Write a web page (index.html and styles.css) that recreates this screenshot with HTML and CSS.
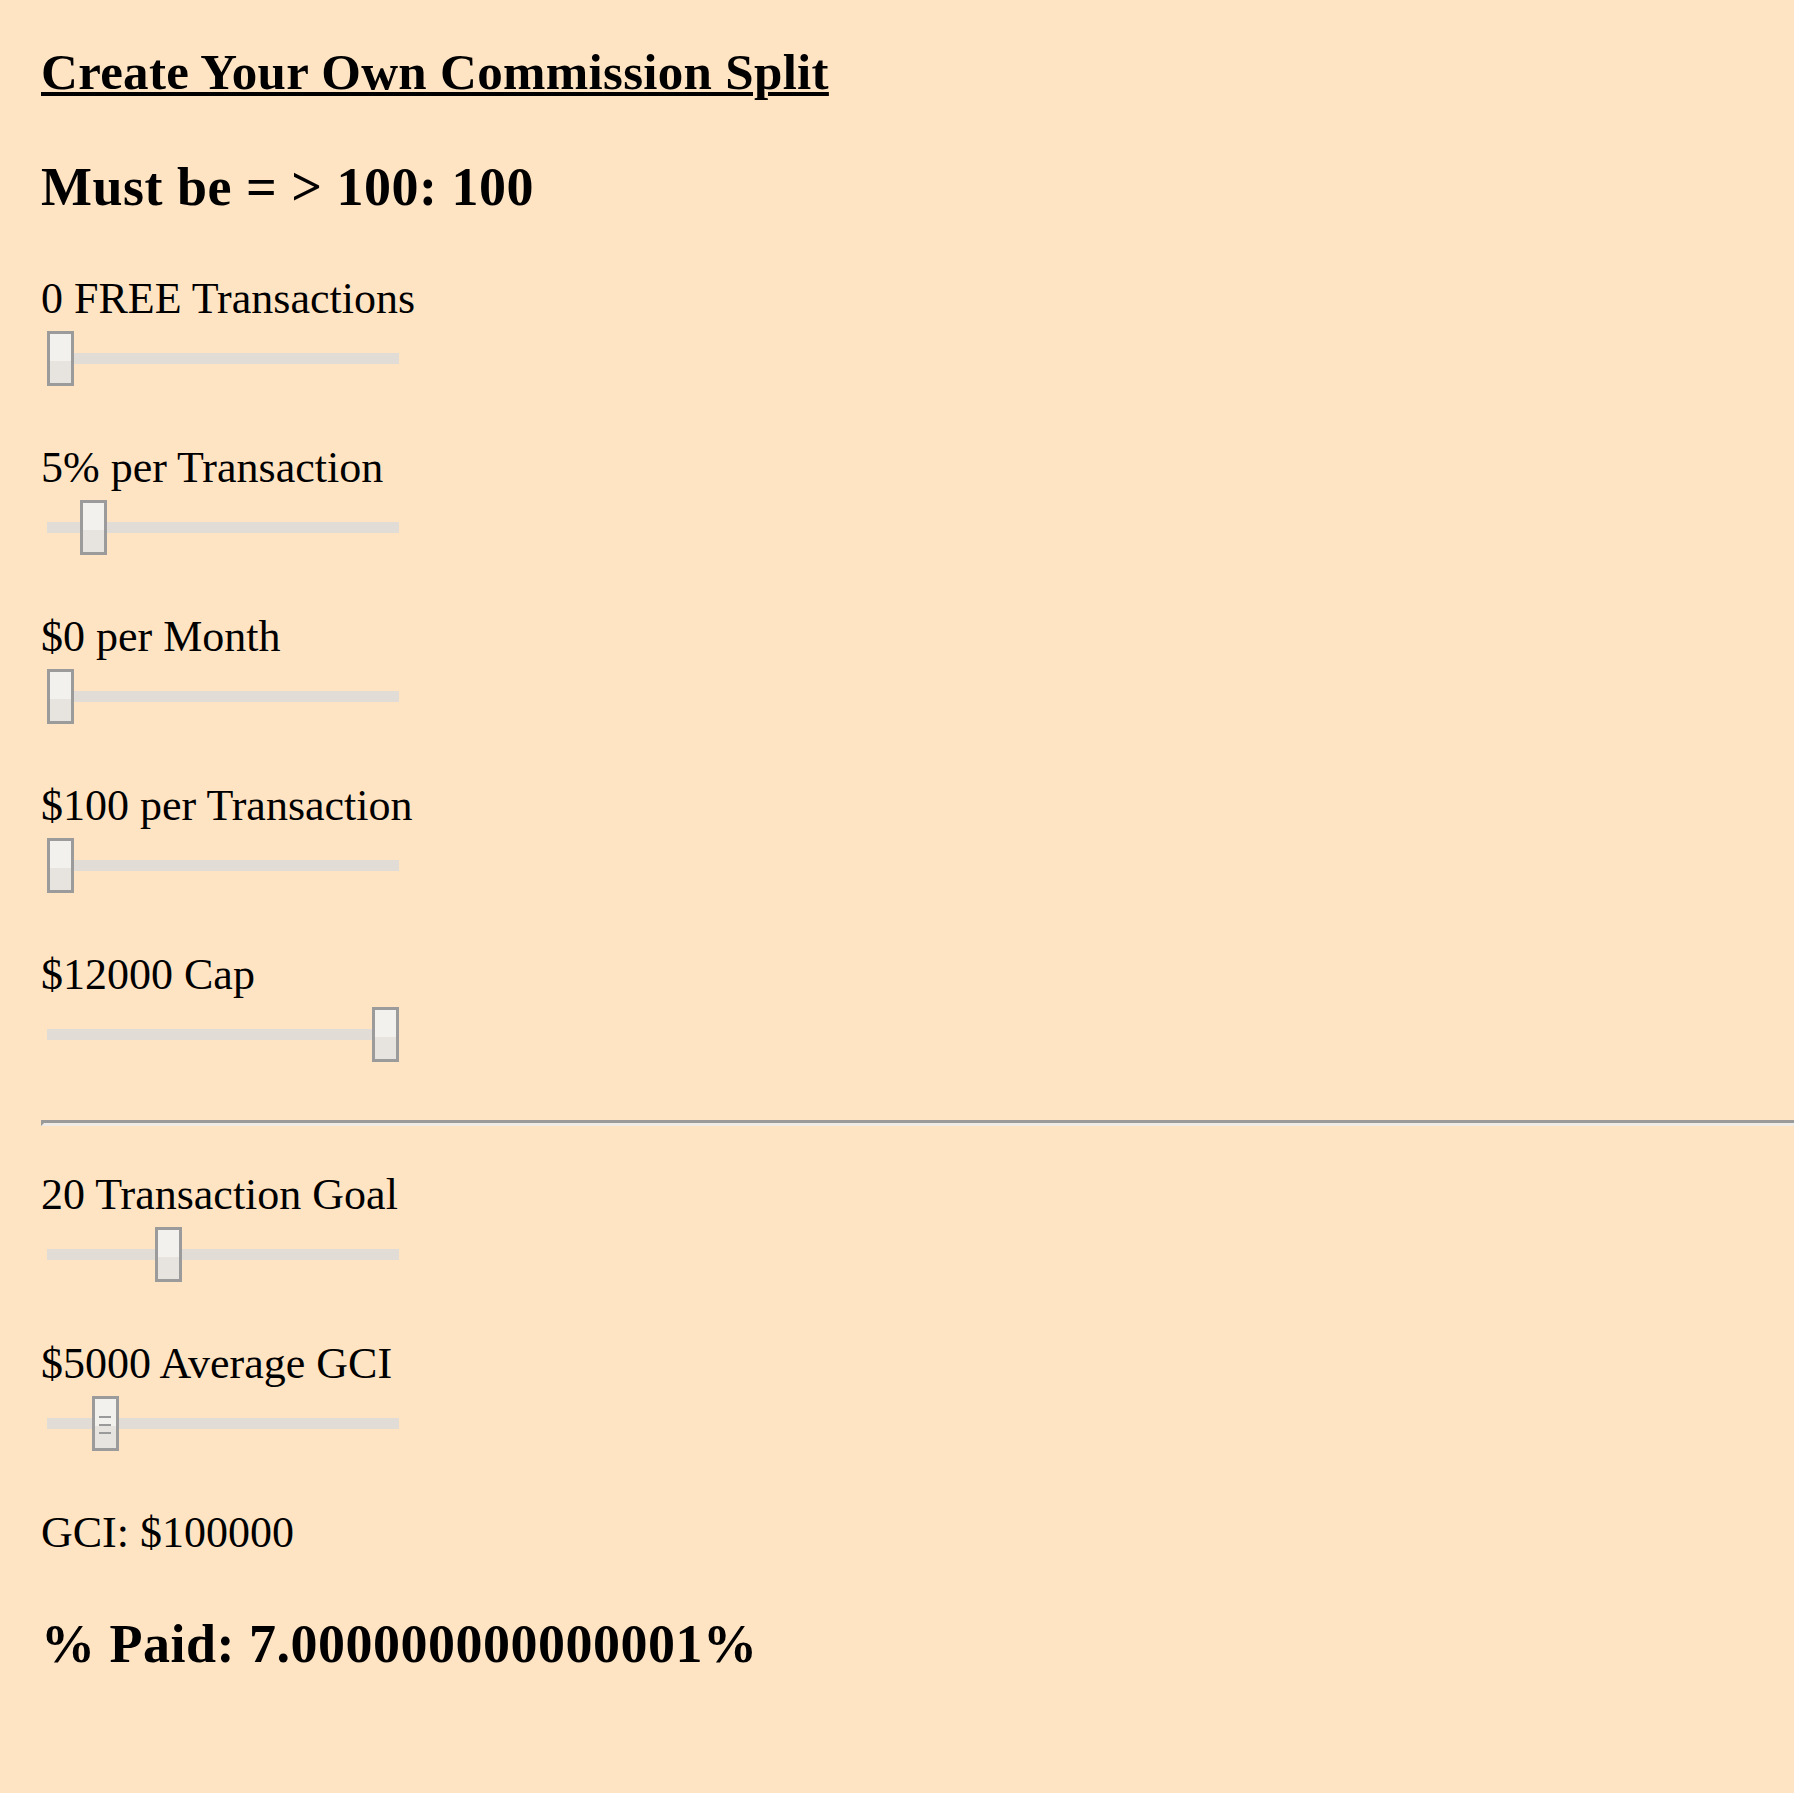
FILE: index.html
```html
<!DOCTYPE html>
<html lang="en">
<head>
<meta charset="utf-8">
<title>Create Your Own Commission Split</title>
<link rel="stylesheet" href="styles.css">
</head>
<body>
<main class="page">
  <h1 class="title">Create Your Own Commission Split</h1>
  <h2 class="total">Must be = &gt; 100: 100</h2>

  <section class="fields">
    <div class="field">
      <label class="field-label" for="free">0 FREE Transactions</label>
      <input class="slider" type="range" id="free" min="0" max="10" value="0">
    </div>
    <div class="field">
      <label class="field-label" for="pct">5% per Transaction</label>
      <input class="slider" type="range" id="pct" min="0" max="50" value="5">
    </div>
    <div class="field">
      <label class="field-label" for="month">$0 per Month</label>
      <input class="slider" type="range" id="month" min="0" max="500" value="0">
    </div>
    <div class="field">
      <label class="field-label" for="fee">$100 per Transaction</label>
      <input class="slider" type="range" id="fee" min="100" max="1000" value="100">
    </div>
    <div class="field">
      <label class="field-label" for="cap">$12000 Cap</label>
      <input class="slider" type="range" id="cap" min="0" max="12000" value="12000">
    </div>
  </section>

  <hr class="divider">

  <section class="fields">
    <div class="field">
      <label class="field-label" for="goal">20 Transaction Goal</label>
      <input class="slider" type="range" id="goal" min="0" max="60" value="20">
    </div>
    <div class="field">
      <label class="field-label" for="avg">$5000 Average GCI</label>
      <input class="slider slider-focused" type="range" id="avg" min="1000" max="30000" step="1000" value="5000">
    </div>
  </section>

  <p class="gci">GCI: $100000</p>
  <h2 class="paid">% Paid: 7.000000000000001%</h2>
</main>
</body>
</html>
```

FILE: styles.css
```css
html, body {
  margin: 0;
  padding: 0;
}

body {
  background: #ffe4c4;
  color: #000;
  font-family: "Liberation Serif", "Times New Roman", serif;
}

.page {
  padding: 43px 0 120px 41px;
}

.title {
  margin: 0;
  font-size: 51px;
  line-height: 59px;
  font-weight: bold;
  letter-spacing: 0.3px;
  text-decoration: underline;
  text-decoration-thickness: 4px;
  text-underline-offset: 3px;
}

.total {
  margin: 54px 0 0;
  font-size: 54px;
  line-height: 62px;
  font-weight: bold;
  letter-spacing: 0.5px;
}

.fields {
  display: flex;
  flex-direction: column;
  gap: 57px;
  margin-top: 56px;
}

.field {
  display: flex;
  flex-direction: column;
  align-items: flex-start;
}

.field-label {
  font-size: 44px;
  line-height: 50px;
}

.slider {
  -webkit-appearance: none;
  appearance: none;
  display: block;
  width: 352px;
  height: 55px;
  margin: 7px 0 0 6px;
  padding: 0;
  background: transparent;
  outline: none;
}

.slider::-webkit-slider-runnable-track {
  height: 11px;
  background: #e1dcd6;
  border: none;
}

.slider::-webkit-slider-thumb {
  -webkit-appearance: none;
  appearance: none;
  box-sizing: border-box;
  width: 27px;
  height: 55px;
  margin-top: -22px;
  border: 3px solid #9b9b9b;
  border-radius: 0;
  background: linear-gradient(#f3f1ee 0 27px, #e7e3df 27px);
}

.slider-focused::-webkit-slider-thumb {
  background:
    linear-gradient(#9a9a9a, #9a9a9a) center 17px / 12px 2px no-repeat,
    linear-gradient(#9a9a9a, #9a9a9a) center 25px / 12px 2px no-repeat,
    linear-gradient(#9a9a9a, #9a9a9a) center 33px / 12px 2px no-repeat,
    linear-gradient(#f3f1ee 0 27px, #e7e3df 27px);
}

.divider {
  height: 0;
  margin: 58px 0 0;
  border-style: solid;
  border-width: 3px 0 3px 3px;
  border-color: #9a9a9a #efeae3 #efeae3 #9a9a9a;
}

.divider + .fields {
  margin-top: 44px;
}

.gci {
  margin: 57px 0 0;
  font-size: 44px;
  line-height: 50px;
}

.paid {
  margin: 55px 0 0;
  font-size: 54px;
  line-height: 62px;
  font-weight: bold;
  letter-spacing: 0.5px;
}
```
